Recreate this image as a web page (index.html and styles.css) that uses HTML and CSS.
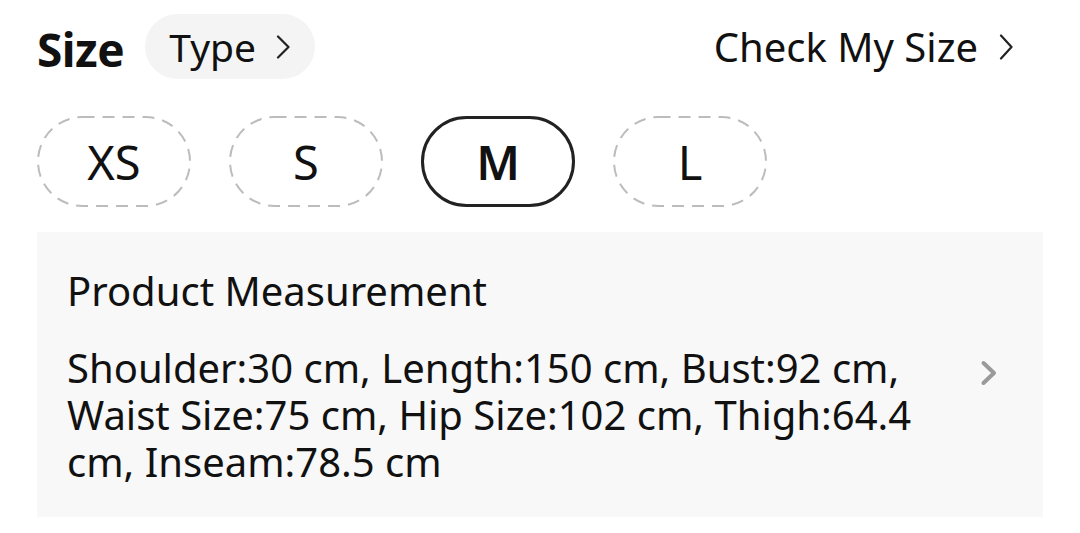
FILE: index.html
```html
<!DOCTYPE html>
<html>
<head>
<meta charset="utf-8">
<link rel="stylesheet" href="styles.css">
</head>
<body>
<div class="page">
  <div class="header">
    <div class="left">
      <span class="title">Size</span>
      <span class="type-pill">Type
        <svg class="chev" width="14" height="24" viewBox="0 0 14 24"><path d="M2 1.5 L12.5 12 L2 22.5" fill="none" stroke="#222" stroke-width="2.2" stroke-linecap="round" stroke-linejoin="round"/></svg>
      </span>
    </div>
    <div class="check">Check My Size
      <svg class="chev" width="14" height="26" viewBox="0 0 14 26"><path d="M2 1.5 L12.5 13 L2 24.5" fill="none" stroke="#222" stroke-width="2.2" stroke-linecap="round" stroke-linejoin="round"/></svg>
    </div>
  </div>
  <div class="sizes">
    <div class="chip"><svg class="dash" width="154" height="91" viewBox="0 0 154 91"><rect x="1" y="1" width="152" height="89" rx="44.5" fill="none" stroke="#bcbcbc" stroke-width="2" stroke-dasharray="12 8"/></svg>XS</div>
    <div class="chip"><svg class="dash" width="154" height="91" viewBox="0 0 154 91"><rect x="1" y="1" width="152" height="89" rx="44.5" fill="none" stroke="#bcbcbc" stroke-width="2" stroke-dasharray="12 8"/></svg>S</div>
    <div class="chip selected">M</div>
    <div class="chip"><svg class="dash" width="154" height="91" viewBox="0 0 154 91"><rect x="1" y="1" width="152" height="89" rx="44.5" fill="none" stroke="#bcbcbc" stroke-width="2" stroke-dasharray="12 8"/></svg>L</div>
  </div>
  <div class="measure">
    <div class="m-title">Product Measurement</div>
    <div class="m-row">
      <div class="m-text">Shoulder:30 cm, Length:150 cm, Bust:92 cm, Waist Size:75 cm, Hip Size:102 cm, Thigh:64.4 cm, Inseam:78.5 cm</div>
      <svg class="m-chev" width="18" height="26" viewBox="0 0 18 26"><path d="M3.5 3 L14 13 L3.5 23" fill="none" stroke="#9a9a9a" stroke-width="4" stroke-linecap="round" stroke-linejoin="round"/></svg>
    </div>
  </div>
</div>
</body>
</html>
```
FILE: styles.css
```css
* { box-sizing: border-box; }
html, body { margin: 0; padding: 0; background: #fff; }
body { font-family: "Noto Sans", "Open Sans", sans-serif; color: #111; }
.page { width: 1080px; padding: 14px 37px 0 37px; }
.header { display: flex; justify-content: space-between; align-items: center; height: 65px; }
.left { display: flex; align-items: center; gap: 21px; }
.title { font-size: 46px; font-weight: 700; letter-spacing: -0.5px; line-height: 1; margin-top: 4px; }
.type-pill { display: flex; align-items: center; gap: 20px; height: 65px; padding: 0 25px 0 24px; background: #f4f4f4; border-radius: 33px; font-size: 39px; }
.check { display: flex; align-items: center; gap: 21px; font-size: 40px; padding-right: 30px; }
.sizes { display: flex; gap: 38px; margin-top: 37px; }
.chip { position: relative; width: 154px; height: 91px; border-radius: 46px; display: flex; align-items: center; justify-content: center; font-size: 47px; font-weight: 400; }
.chip .dash { position: absolute; left: 0; top: 0; }
.chip.selected { border: 3px solid #222; font-weight: 600; }
.measure { margin-top: 25px; background: #f8f8f8; height: 285px; padding: 35px 30px 0 30px; }
.m-title { font-size: 40px; line-height: 48px; }
.m-row { display: flex; align-items: flex-start; margin-top: 29px; }
.m-text { width: 880px; font-size: 40px; line-height: 47px; }
.m-chev { margin-left: 33px; margin-top: 16px; }
```
